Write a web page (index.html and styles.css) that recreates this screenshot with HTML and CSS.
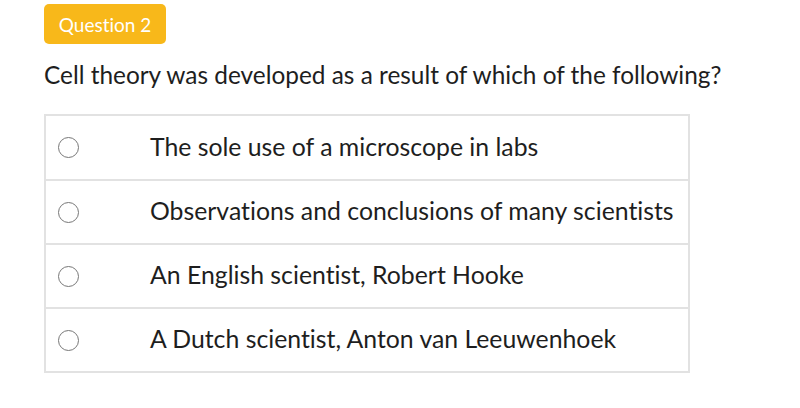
FILE: index.html
```html
<!DOCTYPE html>
<html>
<head>
<meta charset="utf-8">
<link rel="stylesheet" href="styles.css">
</head>
<body>
<div class="page">
  <div class="badge">Question 2</div>
  <p class="question">Cell theory was developed as a result of which of the following?</p>
  <div class="options">
    <div class="option"><span class="radio"></span><span class="label">The sole use of a microscope in labs</span></div>
    <div class="option"><span class="radio"></span><span class="label">Observations and conclusions of many scientists</span></div>
    <div class="option"><span class="radio"></span><span class="label">An English scientist, Robert Hooke</span></div>
    <div class="option"><span class="radio"></span><span class="label">A Dutch scientist, Anton van Leeuwenhoek</span></div>
  </div>
</div>
</body>
</html>
```

FILE: styles.css
```css
html, body {
  margin: 0;
  padding: 0;
  background: #fff;
}
.page {
  padding: 4px 0 0 44px;
  font-family: Lato, "Open Sans", sans-serif;
  font-variant-ligatures: none;
  color: #1e1e1e;
}
.badge {
  display: inline-flex;
  align-items: center;
  justify-content: center;
  width: 122px;
  height: 40px;
  box-sizing: border-box;
  background: #f8b81a;
  color: #fff;
  border-radius: 5px;
  font-size: 19px;
}
.question {
  margin: 15px 0 0 0;
  font-size: 24.4px;
  line-height: 32px;
}
.options {
  margin-top: 23px;
  width: 642px;
  border: 2px solid #e2e2e2;
  border-bottom-width: 1px;
}
.option {
  display: flex;
  align-items: center;
  height: 63px;
  border-bottom: 1px solid #e2e2e2;
}
.option + .option {
  border-top: 1px solid #e2e2e2;
  height: 62px;
}
.radio {
  width: 21px;
  height: 21px;
  box-sizing: border-box;
  border: 1.5px solid #777;
  border-radius: 50%;
  margin-left: 12px;
  flex: none;
}
.label {
  margin-left: 71px;
  margin-bottom: 3px;
  font-size: 24.8px;
}
```
